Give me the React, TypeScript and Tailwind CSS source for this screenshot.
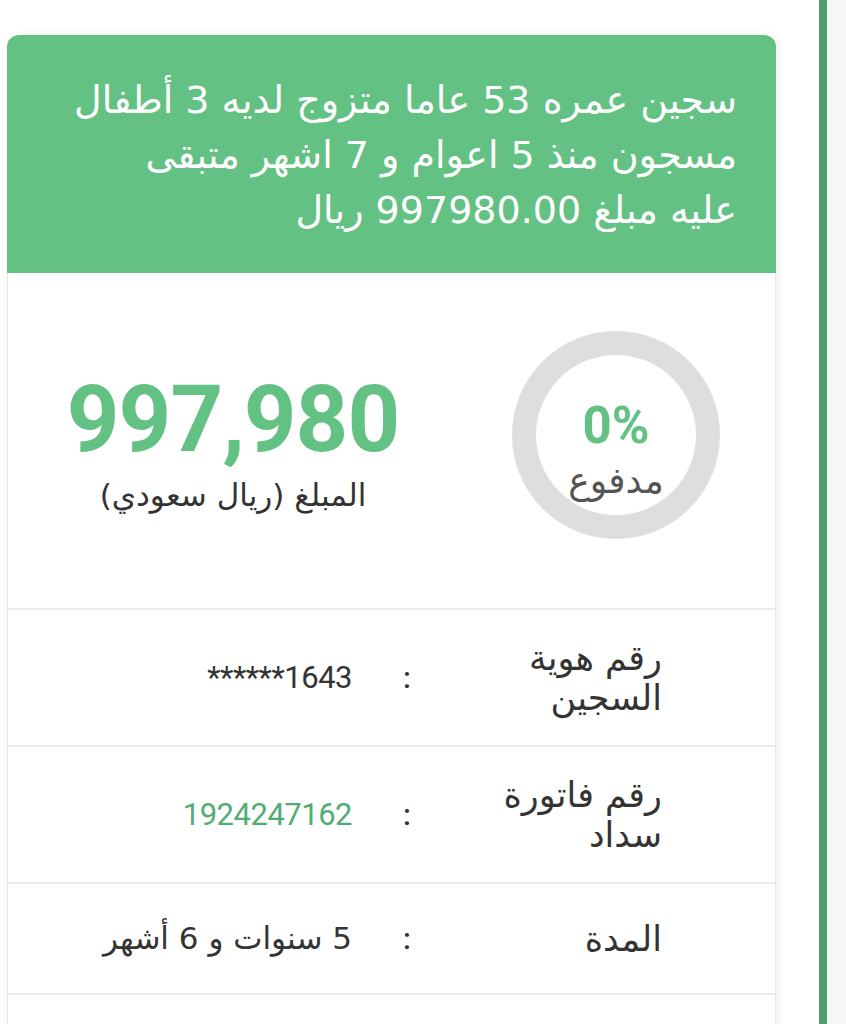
import React from 'react';

type Row = {
  label: React.ReactNode;
  value: React.ReactNode;
  green?: boolean;
  height: string;
};

const rows: Row[] = [
  {
    label: <>رقم هوية<br />السجين</>,
    value: <span dir="ltr" className="font-['Roboto',sans-serif]">******1643</span>,
    height: 'h-[137px]',
  },
  {
    label: <>رقم فاتورة<br />سداد</>,
    value: <span className="font-['Roboto',sans-serif]">1924247162</span>,
    green: true,
    height: 'h-[137px]',
  },
  { label: 'المدة', value: '5 سنوات و 6 أشهر', height: 'h-[111px]' },
  { label: '', value: '', height: 'h-[111px]' },
];

export default function App() {
  return (
    <div className="h-screen overflow-hidden bg-white flex font-['DejaVu_Sans','Noto_Sans',sans-serif]">
      {/* Card column */}
      <div className="w-[819px] pt-[35px] pl-[7px] pr-[43px] shrink-0">
        <div className="rounded-t-[12px] bg-white shadow-[2px_0_8px_rgba(0,0,0,0.08)] border-x border-[#e8e8e8]">
          {/* Green header */}
          <div
            dir="rtl"
            className="bg-[#64c184] rounded-t-[12px] -mx-px h-[238px] pr-[39px] pl-[20px] pt-[38px] text-white text-[38px] leading-[55px] whitespace-nowrap"
          >
            سجين عمره 53 عاما متزوج لديه 3 أطفال
            <br />
            مسجون منذ 5 اعوام و 7 اشهر متبقى
            <br />
            عليه مبلغ 997980.00 ريال
          </div>

          {/* Summary */}
          <div className="flex items-start h-[335px] pt-[58px]">
            <div className="w-[450px] flex flex-col items-center pt-[43px]">
              <div className="font-['Roboto',sans-serif] text-[92px] font-bold leading-none text-[#64c184] tracking-[-1px]">
                997,980
              </div>
              <div dir="rtl" className="mt-[6px] text-[31px] text-[#333]">
                المبلغ (ريال سعودي)
              </div>
            </div>
            <div className="flex-1 flex justify-end pr-[55px]">
              <div className="w-[208px] h-[208px] rounded-full border-[24px] border-[#dedede] flex flex-col items-center pt-[45px]">
                <div className="font-['Roboto',sans-serif] text-[51px] font-bold leading-none text-[#64c184]">
                  0%
                </div>
                <div dir="rtl" className="mt-[12px] text-[36px] leading-none text-[#555]">
                  مدفوع
                </div>
              </div>
            </div>
          </div>

          {/* Details rows */}
          {rows.map((r, i) => (
            <div
              key={i}
              dir="rtl"
              className={`flex items-center border-t-2 border-[#ececec] pr-[113px] ${r.height}`}
            >
              <div className="w-[200px] shrink-0 text-[35px] leading-[40px] text-[#333]">
                {r.label}
              </div>
              <div className="w-[110px] shrink-0 text-center font-['Roboto',sans-serif] text-[30px] font-medium text-[#333]">
                {r.label ? ':' : ''}
              </div>
              <div className={`text-[31px] tracking-[-0.5px] ${r.green ? 'text-[#52ad73]' : 'text-[#333]'}`}>
                {r.value}
              </div>
            </div>
          ))}
        </div>
      </div>

      {/* Right side bar */}
      <div className="w-[8px] shrink-0 bg-[#4e9e69]" />
      <div className="flex-1 bg-[#f6f6f6]" />
    </div>
  );
}
